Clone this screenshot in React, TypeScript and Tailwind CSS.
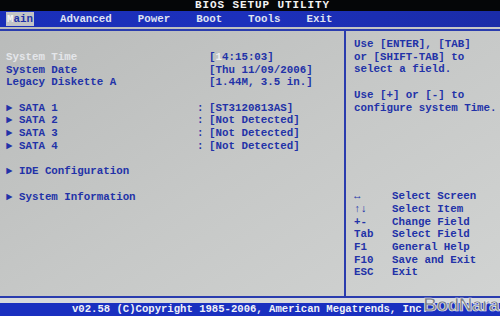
import React from 'react';

const mono = { fontFamily: '"Liberation Mono", "DejaVu Sans Mono", monospace' };

const menu = ['Advanced', 'Power', 'Boot', 'Tools', 'Exit'];

const sata = [
  { name: 'SATA 1', value: '[ST3120813AS]' },
  { name: 'SATA 2', value: '[Not Detected]' },
  { name: 'SATA 3', value: '[Not Detected]' },
  { name: 'SATA 4', value: '[Not Detected]' },
];

const keys = [
  { key: '↔', label: 'Select Screen' },
  { key: '↑↓', label: 'Select Item' },
  { key: '+-', label: 'Change Field' },
  { key: 'Tab', label: 'Select Field' },
  { key: 'F1', label: 'General Help' },
  { key: 'F10', label: 'Save and Exit' },
  { key: 'ESC', label: 'Exit' },
];

function Row({ label, value, colon, arrow, light }: { label: string; value?: string; colon?: boolean; arrow?: boolean; light?: boolean }) {
  return (
    <div className="flex h-[12.7px] items-center">
      <span className={`w-[191px] whitespace-pre ${light ? 'text-[#e4e6ea]' : ''}`}>
        {arrow ? '► ' : ''}
        {label}
      </span>
      <span className="w-[12px]">{colon ? ':' : ''}</span>
      {value && (
        <span className="whitespace-pre">
          {light ? (
            <>
              [<span className="text-[#eef0f4]">1</span>
              {value.slice(2)}
            </>
          ) : (
            value
          )}
        </span>
      )}
    </div>
  );
}

export default function App() {
  return (
    <div
      className="relative flex h-[316px] w-[500px] flex-col overflow-hidden bg-gradient-to-br from-[#b8bab9] via-[#c6c8c7] to-[#d2d4d3] text-[10.8px] font-bold text-[#2232a8]"
      style={mono}
    >
      {/* title */}
      <div className="flex h-[11px] items-center bg-[#050608] pl-[195px] text-[11px] leading-[11px] tracking-[0.9px] text-[#f2f2f2]">
        BIOS SETUP UTILITY
      </div>

      {/* menu bar */}
      <div className="flex h-[16px] items-center gap-[26px] bg-gradient-to-r from-[#1a2fb8] via-[#1c30bc] to-[#1a2ca8] pl-[6px] text-[#dfe2f2]">
        <span className="bg-[#c2c4c6] px-[1px] leading-[14px] text-[#2232a8]">
          <span className="text-[#f4f4f4]">M</span>ain
        </span>
        {menu.map((m) => (
          <span key={m}>{m}</span>
        ))}
      </div>

      <div className="h-[2px]" />

      {/* body */}
      <div className="flex flex-1 border-y-2 border-[#2a3cae]">
        <div className="w-[346px] border-r-2 border-[#2a3cae] pl-[6px] pt-[20px] leading-[12.7px]">
          <Row label="System Time" value="[14:15:03]" light />
          <Row label="System Date" value="[Thu 11/09/2006]" />
          <Row label="Legacy Diskette A" value="[1.44M, 3.5 in.]" />
          <div className="h-[12.7px]" />
          {sata.map((s) => (
            <Row key={s.name} label={s.name} value={s.value} colon arrow />
          ))}
          <div className="h-[12.7px]" />
          <Row label="IDE Configuration" arrow />
          <div className="h-[12.7px]" />
          <Row label="System Information" arrow />
        </div>

        <div className="flex-1 pl-[8px] pt-[7px] leading-[12.7px]">
          <div>Use [ENTER], [TAB]</div>
          <div>or [SHIFT-TAB] to</div>
          <div>select a field.</div>
          <div className="h-[12.7px]" />
          <div>Use [+] or [-] to</div>
          <div>configure system Time.</div>

          <div className="mt-[76px]">
            {keys.map((k) => (
              <div key={k.key} className="flex h-[12.7px] items-center">
                <span className="w-[38px]">{k.key}</span>
                <span>{k.label}</span>
              </div>
            ))}
          </div>
        </div>
      </div>

      <div className="h-[5px] bg-[#d8dadc]" />

      {/* footer */}
      <div className="flex h-[13px] items-center justify-center bg-[#1a30c0] text-[10.6px] leading-[13px] text-[#f0f2f8]">
        v02.58 (C)Copyright 1985-2006, American Megatrends, Inc.
      </div>

      {/* watermark */}
      <div
        className="absolute bottom-[-3px] right-[1px] text-[19px] font-black tracking-[-0.5px] text-[#7c7f86]"
        style={{ fontFamily: '"Liberation Sans", Arial, sans-serif', WebkitTextStroke: '0.7px #eef0f4' }}
      >
        BodNara
      </div>
    </div>
  );
}
